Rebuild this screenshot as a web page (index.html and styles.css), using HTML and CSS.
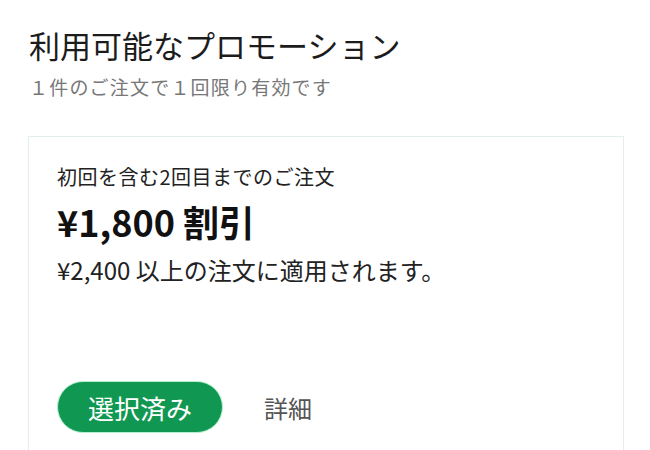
FILE: index.html
```html
<!DOCTYPE html>
<html lang="ja">
<head>
    <meta charset="UTF-8">
    <meta name="viewport" content="width=device-width, initial-scale=1.0">
    <title>利用可能なプロモーション</title>
    <link rel="stylesheet" href="styles.css">
</head>
<body>
    <div class="promo-page">
        <h1 class="promo-title">利用可能なプロモーション</h1>
        <p class="promo-note">１件のご注文で１回限り有効です</p>

        <div class="promo-card">
            <div class="promo-scope">初回を含む2回目までのご注文</div>
            <div class="promo-amount">¥1,800 割引</div>
            <div class="promo-cond">¥2,400 以上の注文に適用されます。</div>

            <div class="promo-actions">
                <button type="button" class="btn-selected">選択済み</button>
                <a class="promo-detail" href="#">詳細</a>
            </div>
        </div>
    </div>
</body>
</html>
```

FILE: styles.css
```css
*{
    box-sizing: border-box;
}
body{
    margin: 0;
    background: #fff;
    font-family: "Noto Sans CJK JP", "Noto Sans", sans-serif;
    color: #1a1a1a;
}
.promo-page{
    height: 100vh;
    overflow: hidden;
    padding: 25px 26px 0 28px;
}
.promo-title{
    margin: 0;
    font-size: 31px;
    font-weight: 400;
    line-height: 40px;
    padding-left: 1px;
    color: #1c1c1c;
}
.promo-note{
    margin: 9px 0 0;
    font-size: 19px;
    line-height: 26px;
    letter-spacing: 1.2px;
    padding-left: 1px;
    color: #777;
}
.promo-card{
    margin-top: 36px;
    border: 1px solid #e4eeee;
    height: 340px;
    padding: 26px 28px 0;
}
.promo-scope{
    font-size: 20px;
    line-height: 28px;
    letter-spacing: 0.5px;
    color: #222;
}
.promo-amount{
    margin-top: 7px;
    font-size: 36px;
    font-weight: 700;
    line-height: 46px;
    color: #111;
}
.promo-cond{
    margin-top: 10px;
    font-size: 24px;
    line-height: 32px;
    color: #222;
}
.promo-actions{
    margin-top: 95px;
    display: flex;
    align-items: center;
    gap: 41px;
}
.btn-selected{
    height: 52px;
    padding: 0 30px;
    border: 1px solid #b6f0cf;
    border-radius: 26px;
    background: #109852;
    color: #fff;
    font-family: inherit;
    font-size: 26px;
    cursor: pointer;
}
.promo-detail{
    font-size: 24px;
    color: #555;
    text-decoration: none;
}
```
